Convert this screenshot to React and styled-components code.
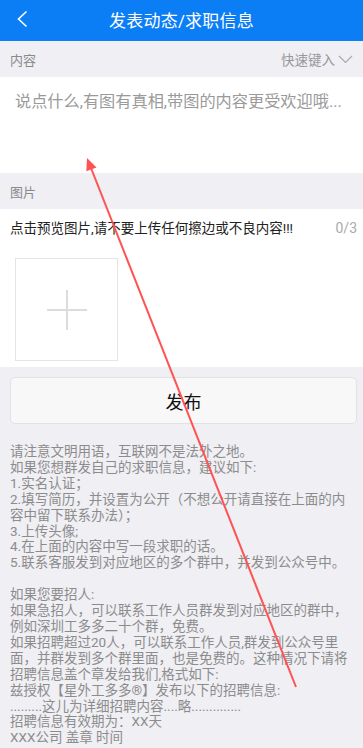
import React from 'react'
import styled, { createGlobalStyle } from 'styled-components'

const GlobalStyle = createGlobalStyle`
    html, body {
        margin: 0;
        padding: 0;
        background: #efeff4;
    }
    * {
        box-sizing: border-box;
    }
`

const notice = `请注意文明用语，互联网不是法外之地。
如果您想群发自己的求职信息，建议如下:
1.实名认证；
2.填写简历，并设置为公开（不想公开请直接在上面的内
容中留下联系办法）；
3.上传头像;
4.在上面的内容中写一段求职的话。
5.联系客服发到对应地区的多个群中，并发到公众号中。

如果您要招人:
如果急招人，可以联系工作人员群发到对应地区的群中，
例如深圳工多多二十个群，免费。
如果招聘超过20人，可以联系工作人员,群发到公众号里
面，并群发到多个群里面，也是免费的。这种情况下请将
招聘信息盖个章发给我们,格式如下:
兹授权【星外工多多®】发布以下的招聘信息:
.........这儿为详细招聘内容....略..............
招聘信息有效期为：XX天
XXX公司 盖章 时间`

function App() {
  return (
    <Page>
        <GlobalStyle />
        <Header>
            <BackButton>
                <svg width="12" height="18" viewBox="0 0 12 18">
                    <path d="M10.5 1.5 L2.5 9 L10.5 16.5" fill="none" stroke="#fff" strokeWidth="1.6" />
                </svg>
            </BackButton>
            <Title>发表动态/求职信息</Title>
        </Header>

        <SectionLabel>
            <span>内容</span>
            <QuickInput>
                快速键入
                <svg width="15" height="9" viewBox="0 0 15 9">
                    <path d="M1 1 L7.5 7.5 L14 1" fill="none" stroke="#aaa" strokeWidth="1.2" />
                </svg>
            </QuickInput>
        </SectionLabel>
        <ContentBox>
            <Placeholder>说点什么,有图有真相,带图的内容更受欢迎哦...</Placeholder>
        </ContentBox>

        <SectionLabel>
            <span>图片</span>
        </SectionLabel>
        <ImagePanel>
            <ImageHint>
                <span>点击预览图片,请不要上传任何擦边或不良内容!!!</span>
                <Count>0/3</Count>
            </ImageHint>
            <AddBox>
                <svg width="40" height="40" viewBox="0 0 40 40">
                    <path d="M0 20 H40 M20 0 V40" stroke="#dcdcdc" strokeWidth="2" />
                </svg>
            </AddBox>
        </ImagePanel>

        <ButtonRow>
            <PublishButton>发布</PublishButton>
        </ButtonRow>

        <Notice>{notice}</Notice>

        <Overlay width="363" height="748" viewBox="0 0 363 748">
            <line x1="296" y1="687" x2="91" y2="168" stroke="#ff5252" strokeWidth="2" />
            <polygon points="87,158 96.5,167.5 86.3,171.3" fill="#ff5252" />
        </Overlay>
    </Page>
  )
}

export default App

const Page = styled.div`
    position: relative;
    width: 363px;
    min-height: 748px;
    overflow: hidden;
    background: #efeff4;
    font-family: Roboto, "Noto Sans CJK SC", "Noto Sans", sans-serif;
`

const Header = styled.div`
    height: 41px;
    background: #0b7ef6;
    display: flex;
    align-items: center;
    justify-content: center;
    position: relative;
`

const BackButton = styled.div`
    position: absolute;
    left: 16px;
    top: 10px;
    display: flex;
`

const Title = styled.div`
    color: #fff;
    font-size: 17px;
    letter-spacing: 0.2px;
    margin-top: -2px;
`

const SectionLabel = styled.div`
    height: 36px;
    display: flex;
    align-items: center;
    justify-content: space-between;
    padding: 0 10px;
    font-size: 13px;
    color: #8a8a8a;
`

const QuickInput = styled.div`
    display: flex;
    align-items: center;
    gap: 3px;
    font-size: 13.5px;
    color: #999;
`

const ContentBox = styled.div`
    height: 96px;
    background: #fff;
    padding: 11px 15px;
`

const Placeholder = styled.div`
    font-size: 16.2px;
    color: #9a9a9a;
    white-space: nowrap;
`

const ImagePanel = styled.div`
    background: #fff;
    padding: 9px 6px 15px 10px;
    height: 158px;
`

const ImageHint = styled.div`
    display: flex;
    justify-content: space-between;
    align-items: center;
    font-size: 13.5px;
    color: #222;
    line-height: 20px;
`

const Count = styled.span`
    color: #aaa;
    font-size: 14px;
`

const AddBox = styled.div`
    width: 103px;
    height: 103px;
    margin: 20px 0 0 5px;
    border: 1px solid #e4e4e4;
    display: flex;
    align-items: center;
    justify-content: center;
`

const ButtonRow = styled.div`
    padding: 10px 6px 0 10px;
`

const PublishButton = styled.div`
    height: 47px;
    background: #f8f8f8;
    border: 1px solid #e2e2e4;
    border-radius: 5px;
    display: flex;
    align-items: center;
    justify-content: center;
    font-size: 18px;
    color: #111;
`

const Notice = styled.div`
    padding: 20px 6px 0 10px;
    font-size: 13.5px;
    line-height: 15.9px;
    color: #8c8c8c;
    white-space: pre;
`

const Overlay = styled.svg`
    position: absolute;
    left: 0;
    top: 0;
    pointer-events: none;
`
